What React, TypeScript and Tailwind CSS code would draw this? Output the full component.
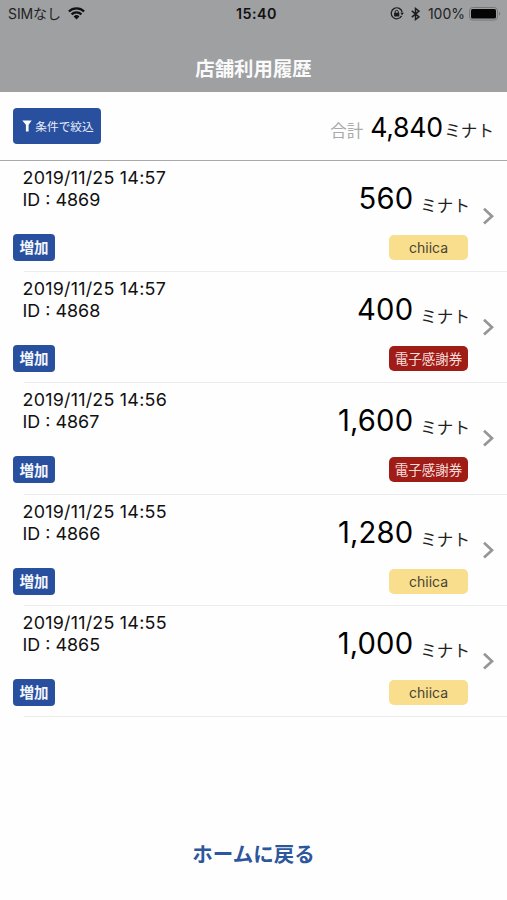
type Kind = "chiica" | "ticket";

type Entry = {
  id: number;
  date: string;
  amount: string;
  kind: Kind;
};

const entries: Entry[] = [
  { id: 4869, date: "2019/11/25 14:57", amount: "560", kind: "chiica" },
  { id: 4868, date: "2019/11/25 14:57", amount: "400", kind: "ticket" },
  { id: 4867, date: "2019/11/25 14:56", amount: "1,600", kind: "ticket" },
  { id: 4866, date: "2019/11/25 14:55", amount: "1,280", kind: "chiica" },
  { id: 4865, date: "2019/11/25 14:55", amount: "1,000", kind: "chiica" },
];

function WifiIcon() {
  return (
    <svg width="17" height="13" viewBox="0 0 17 13" fill="none" stroke="#111" strokeWidth="2.3">
      <path d="M0.9 4.5a10.8 10.8 0 0 1 15.2 0" />
      <path d="M3.6 7.4a6.9 6.9 0 0 1 9.8 0" />
      <path d="M8.5 12.4 5.6 9.5a4.1 4.1 0 0 1 5.8 0z" fill="#111" stroke="none" />
    </svg>
  );
}

function RotationLockIcon() {
  return (
    <svg width="14" height="13" viewBox="0 0 14 13" fill="none" stroke="#1c1c1c" strokeWidth="1.2">
      <path d="M11.6 8.9A5.5 5.5 0 1 1 12.2 5.4" />
      <path d="M10.3 5.7h3.6l-1.8 2.5z" fill="#1c1c1c" stroke="none" />
      <rect x="4.1" y="5.7" width="5.2" height="3.8" rx="0.4" fill="#1c1c1c" stroke="none" />
      <path d="M5.1 6.2V4.9a1.6 1.6 0 0 1 3.2 0v1.3" strokeWidth="1" />
    </svg>
  );
}

function BluetoothIcon() {
  return (
    <svg width="9" height="14" viewBox="0 0 9 14" fill="none" stroke="#1c1c1c" strokeWidth="1.5">
      <path d="M0.8 3.9 8 9.8 4.5 12.5V1.5L8 4.2 0.8 10.1" />
    </svg>
  );
}

function BatteryIcon() {
  return (
    <svg width="32" height="14" viewBox="0 0 32 14">
      <rect x="0.5" y="0.5" width="28" height="12.6" rx="3.2" fill="none" stroke="#77787a" />
      <rect x="2" y="2" width="25" height="9.6" rx="1.6" fill="#050505" />
      <path d="M30 4.8c1.7.6 1.7 3.4 0 4z" fill="#77787a" />
    </svg>
  );
}

function StatusBar() {
  return (
    <div className="grid h-[27px] grid-cols-3 items-center pl-2 pr-[6px] text-[14px] text-[#222]">
      <div className="flex items-center gap-[7px]">
        <span className="whitespace-nowrap tracking-[-0.1px]">SIMなし</span>
        <WifiIcon />
      </div>
      <span className="pl-1 text-center text-[14.3px] font-semibold tracking-[0.5px] text-[#111]">15:40</span>
      <div className="flex items-center justify-end">
        <RotationLockIcon />
        <span className="ml-[7px]">
          <BluetoothIcon />
        </span>
        <span className="ml-[8px] mr-[4px]">100%</span>
        <BatteryIcon />
      </div>
    </div>
  );
}

function KindTag({ kind }: { kind: Kind }) {
  if (kind === "chiica") {
    return (
      <span className="flex h-[25px] w-[79px] items-center justify-center rounded-[5px] bg-[#f8de8d] text-[14px] text-[#4a4435]">
        chiica
      </span>
    );
  }
  return (
    <span className="flex h-[25px] w-[79px] items-center justify-center rounded-[5px] bg-[#a01c17] text-[13.5px] text-[#f6dedd]">
      電子感謝券
    </span>
  );
}

function HistoryRow({ entry }: { entry: Entry }) {
  return (
    <li className="h-[111.2px]">
      <div className="flex h-[110.2px] pl-[13px] pr-3">
        <div className="flex flex-col items-start pt-[6px]">
          <div className="pl-[9.5px] text-[17.9px] leading-[22px] text-[#111]">
            <div className="tracking-[0.23px]">{entry.date}</div>
            <div>ID : {entry.id}</div>
          </div>
          <span className="mt-[23px] flex h-[27px] w-[42px] items-center justify-center rounded-[4px] bg-[#294f9f] pt-px text-[14.5px] font-bold text-[#f3f6fc]">
            増加
          </span>
        </div>
        <div className="ml-auto flex flex-col items-end pt-5">
          <div className="-mr-[2px] flex h-9 items-start gap-[7px]">
            <span className="text-[29.2px] leading-9 tracking-[0.15px] text-black">{entry.amount}</span>
            <span className="pt-[7px] text-[16.6px] leading-9 text-[#222]">ミナト</span>
          </div>
          <div className="mt-[18px]">
            <KindTag kind={entry.kind} />
          </div>
        </div>
        <svg className="ml-[14px] mt-[46px]" width="13" height="18" viewBox="0 0 13 18" fill="none">
          <path d="M2 1.8 10 9.2 2 16.6" stroke="#969696" strokeWidth="2.7" />
        </svg>
      </div>
      <div className="ml-6 h-px bg-[#ececee]" />
    </li>
  );
}

export default function App() {
  return (
    <div className="flex h-[900px] w-[507px] flex-col overflow-hidden bg-[#fefefe] font-[Inter,'Noto_Sans_CJK_JP',sans-serif]">
      <header className="h-[92px] bg-[#9fa0a2]">
        <StatusBar />
        <h1 className="mt-[28px] text-center text-[19.4px] font-bold leading-7 text-[#fafafa]">店舗利用履歴</h1>
      </header>

      {/* Filter and total */}
      <div className="flex h-[69px] items-center justify-between border-b-[1.5px] border-[#a9a9ab] pl-[13px] pr-[13px]">
        <button className="flex h-[36px] w-[88px] items-center justify-center gap-[3px] rounded-[4px] bg-[#294f9f] pl-[2px] text-[11.7px] text-[#e8edf8]">
          <svg width="10" height="12" viewBox="0 0 10 12">
            <path d="M0.3 0.5h9.4L6.6 4.7V11.5H3.9V4.7z" fill="#fff" />
          </svg>
          <span className="pt-[3px]">条件で絞込</span>
        </button>
        <div className="flex items-baseline pt-[3px]">
          <span className="text-[16.5px] text-[#aaaaaa]">合計</span>
          <span className="ml-[7px] mr-[1.5px] text-[26.7px] tracking-[-0.3px] text-black">4,840</span>
          <span className="text-[16.6px] text-[#222]">ミナト</span>
        </div>
      </div>

      <ul>
        {entries.map((entry) => (
          <HistoryRow key={entry.id} entry={entry} />
        ))}
      </ul>

      <a className="mt-[122px] text-center text-[20.5px] font-bold leading-8 text-[#2d579d]">ホームに戻る</a>
    </div>
  );
}
